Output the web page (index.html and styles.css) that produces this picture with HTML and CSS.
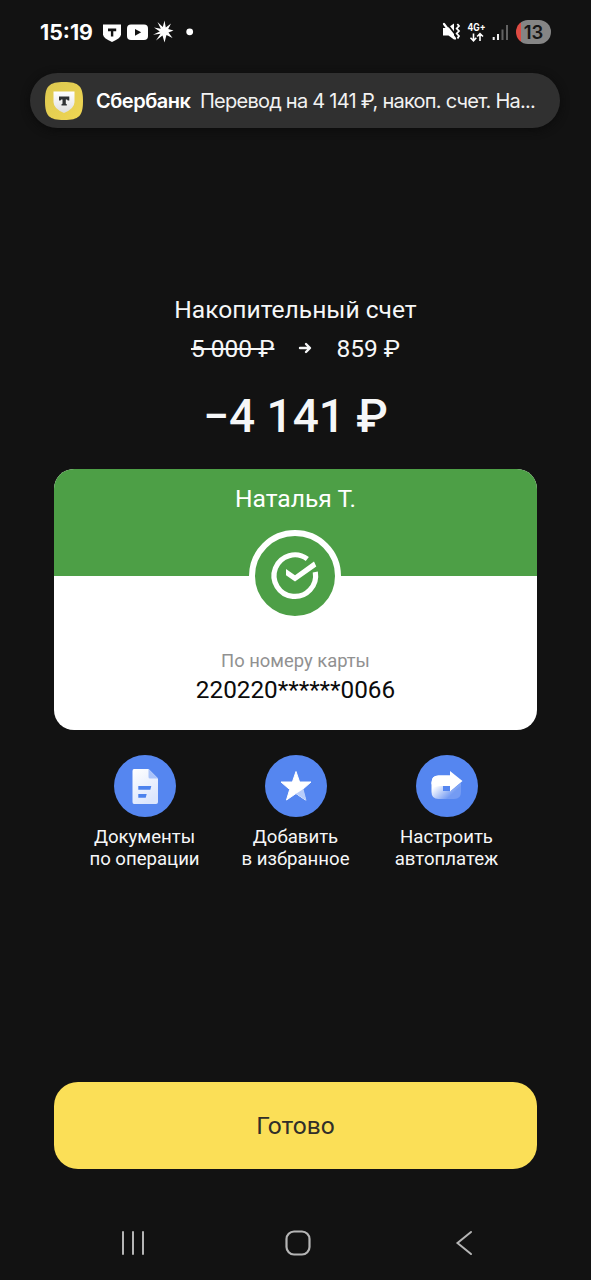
FILE: index.html
```html
<!DOCTYPE html>
<html lang="ru">
<head>
<meta charset="utf-8">
<title>Перевод</title>
<link rel="stylesheet" href="styles.css">
</head>
<body>
<div class="screen">
  <header class="status">
    <div class="status-left">
      <span class="clock">15:19</span>
      <svg class="status-icons" width="100" height="30" viewBox="0 0 100 30">
        <path d="M3 7.500H21V17.500Q21 21 12 25Q3 21 3 17.500Z" fill="#fff"/>
        <path d="M8 11.500H16.200V14.300H13.300V19.500H10.900V14.300H8Z" fill="#121212"/>
        <rect x="27" y="7.500" width="21" height="15.500" rx="4" fill="#fff"/>
        <path d="M35 12L41.200 15.300L35 18.800Z" fill="#121212"/>
        <path d="M64.500 3.500L65.800 10.500L71 6.500L68.200 12L73.500 13.500L68.500 15.500L72.500 21L66.500 18L64.500 25.500L62.500 18.500L56 23.500L60.500 16.800L53 17.800L59.800 14.500L54 10.500L60.800 11.800L57.500 5L62.800 10Z" fill="#fff"/>
        <circle cx="89.700" cy="14.800" r="3.400" fill="#fff"/>
      </svg>
    </div>
    <div class="status-right">
      <svg width="68" height="30" viewBox="0 0 68 30">
        <path d="M1 11H5.500L12 6.500V22.500L6.500 18.500H1Z" fill="#fff"/>
        <path d="M4 5.500L13.500 17.500" stroke="#121212" stroke-width="1.800"/>
        <path d="M2 7L13 21.500" stroke="#fff" stroke-width="2.200" stroke-linecap="round"/>
        <path d="M15.300 7L17 9L14.700 11.500L17 14L14.700 16.500L17 19L15.500 21.500" fill="none" stroke="#fff" stroke-width="1.800"/>
        <text class="network" x="25.500" y="13.500" textLength="18" lengthAdjust="spacingAndGlyphs">4G+</text>
        <path d="M31.500 16.500V23.500M28.500 20.800L31.500 23.800L34.300 20.800M38 24V17M35.200 19.500L38 16.700L41 19.500" fill="none" stroke="#fff" stroke-width="1.600"/>
        <path d="M51.700 20V23M56 17V23" stroke="#f2f2f2" stroke-width="2"/>
        <path d="M60.500 12.500V23M65 8V23" stroke="#626262" stroke-width="2"/>
      </svg>
      <span class="battery">13</span>
    </div>
  </header>

  <section class="notice">
    <svg width="38" height="38" viewBox="0 0 38 38">
      <defs>
        <linearGradient id="shield" x2="0" y2="1"><stop stop-color="#fff"/><stop offset="1" stop-color="#dedede"/></linearGradient>
        <linearGradient id="gold" x2="1" y2="1"><stop stop-color="#dcc850"/><stop offset="1" stop-color="#f0d653"/></linearGradient>
      </defs>
      <path d="M19 0C34 0 38 4 38 19S34 38 19 38S0 34 0 19S4 0 19 0Z" fill="url(#gold)"/>
      <path d="M8.500 9.500H29.500V20Q29.500 26.500 19 31Q8.500 26.500 8.500 20Z" fill="url(#shield)"/>
      <path d="M14 14.500H24.300V18.500H22.800L22 17.500H20.800V21.800L21.800 22.300V23.500H16.500V22.300L17.500 21.800V17.500H16.200L15.500 18.500H14Z" fill="#303234"/>
    </svg>
    <b class="notice-title">Сбербанк</b>
    <span class="notice-text">Перевод на 4 141 ₽, накоп. счет. На...</span>
  </section>

  <main class="transfer">
    <h1 class="account">Накопительный счет</h1>
    <div class="balance">
      <s class="before">5 000 ₽</s>
      <svg width="14" height="14" viewBox="0 0 14 14"><path d="M2 7H11.500M8 3L12 7L8 11" fill="none" stroke="#f6f7f8" stroke-width="2.400" stroke-linecap="round" stroke-linejoin="round"/></svg>
      <span class="after">859 ₽</span>
    </div>
    <div class="amount">−4 141 ₽</div>

    <article class="card">
      <div class="card-head"><span class="recipient">Наталья Т.</span></div>
      <svg class="avatar" width="92" height="92" viewBox="0 0 92 92">
        <circle cx="46" cy="46" r="43" fill="#4d9f46" stroke="#fff" stroke-width="6"/>
        <path d="M58.300 29A20.800 20.800 0 1 0 66.300 42" fill="none" stroke="#fff" stroke-width="5.200"/>
        <path d="M37 39L46 45.300L65 31.500L67.300 36.500L46 51.500L37 45.300Z" fill="#fff"/>
      </svg>
      <div class="card-body">
        <span class="method">По номеру карты</span>
        <span class="number">220220******0066</span>
      </div>
    </article>

    <nav class="actions">
      <a class="action">
        <svg width="62" height="62" viewBox="0 0 62 62">
          <defs><linearGradient id="sheet" x2="0.500" y2="1"><stop stop-color="#fff"/><stop offset="1" stop-color="#dce6fd"/></linearGradient></defs>
          <circle cx="31" cy="31" r="31" fill="#5586f0"/>
          <path d="M20 14H34.500L44 23.500V47Q44 49 42 49H20Q18.500 49 18.500 47V16Q18.500 14 20 14Z" fill="url(#sheet)"/>
          <path d="M34.500 14L44 23.500H36Q34.500 23.500 34.500 22Z" fill="#a9c3fa"/>
          <path d="M24.300 31H37.300L36.300 34.700H24.300ZM24.300 39H32.700L31.700 42.700H24.300Z" fill="#4c82ee"/>
        </svg>
        <span class="label">Документы</span><span class="label">по операции</span>
      </a>
      <a class="action">
        <svg width="62" height="62" viewBox="0 0 62 62">
          <circle cx="31" cy="31" r="31" fill="#5586f0"/>
          <path d="M31 16.500L34.600 27H46L37.500 34.500L40.500 45L31 38.500L21.500 45L24.700 34.500L16 27H27.400Z" fill="#fff" stroke="#fff" stroke-linejoin="round"/>
          <path d="M38.500 34L41.500 45.800L31 38.800Z" fill="#b8cdfa"/>
        </svg>
        <span class="label">Добавить</span><span class="label">в избранное</span>
      </a>
      <a class="action">
        <svg width="62" height="62" viewBox="0 0 62 62">
          <defs>
            <linearGradient id="fade" gradientUnits="userSpaceOnUse" x1="20" y1="30" x2="32" y2="43"><stop stop-color="#fff"/><stop offset="1" stop-color="#749bf3"/></linearGradient>
          </defs>
          <circle cx="31" cy="31" r="31" fill="#5586f0"/>
          <path d="M15.500 27.500Q15.500 20.500 22.500 20.500H38V31H27V36H35L45 28V37Q45 44 38 44H22.500Q15.500 44 15.500 37Z" fill="url(#fade)"/>
          <path d="M15.500 29V27.500Q15.500 20.500 22.500 20.500H34V16L46.500 26L34 36.500V31H27Q22 31 18 32Z" fill="#fff"/>
        </svg>
        <span class="label">Настроить</span><span class="label">автоплатеж</span>
      </a>
    </nav>
  </main>

  <button class="done">Готово</button>

  <footer class="navbar">
    <svg width="24" height="26" viewBox="0 0 24 26"><path d="M2 2V24M12 2V24M22 2V24" stroke="#b5b5b5" stroke-width="2" stroke-linecap="round"/></svg>
    <svg class="home" width="26" height="26" viewBox="0 0 26 26"><rect x="1.500" y="1.500" width="23" height="23" rx="7.500" fill="none" stroke="#b5b5b5" stroke-width="2.200"/></svg>
    <svg width="18" height="26" viewBox="0 0 18 26"><path d="M16 2L2.500 13L16 24" fill="none" stroke="#b5b5b5" stroke-width="2" stroke-linecap="round"/></svg>
  </footer>
</div>
</body>
</html>
```
FILE: styles.css
```css
* { box-sizing: border-box; }
body { margin: 0; background: #121212; }
svg { display: block; flex: none; }
.screen {
  width: 591px; height: 1280px;
  display: flex; flex-direction: column;
  background: #121212; color: #f6f7f8;
  font-family: Roboto, sans-serif;
  white-space: nowrap; overflow: hidden;
}
.status {
  height: 73px; padding: 15px 40px 0 40px;
  display: flex; justify-content: space-between; align-items: flex-start;
}
.status-left, .status-right { display: flex; align-items: center; height: 33px; }
.clock { width: 60px; font: 700 21.3px/30px Inter, sans-serif; letter-spacing: 0; color: #fff; }
.network { font: 700 10px Inter, sans-serif; fill: #fff; }
.status-right { gap: 6px; }
.battery {
  width: 35px; height: 24px; border-radius: 12px;
  background: linear-gradient(90deg, #df4b43 5px, #858585 5px);
  color: #161616; text-align: center; font: 600 18.5px/24px Inter, sans-serif;
}
.notice {
  height: 55px; margin: 0 31px 0 30px; padding-left: 15px;
  display: flex; align-items: center;
  border-radius: 28px; background: #303030;
  box-shadow: 0 2px 8px #0b0b0b;
  font-family: Inter, sans-serif; font-size: 20px;
}
.notice-title { width: 104px; margin-left: 13px; font-weight: 600; letter-spacing: -0.5px; color: #fff; }
.notice-text { letter-spacing: -0.76px; color: #f2f2f2; }
.transfer {
  height: 954px; padding: 165px 54px 0;
  display: flex; flex-direction: column; align-items: center;
}
.account { margin: 0; font-size: 24.6px; font-weight: 400; line-height: 34px; }
.balance { height: 38px; margin-top: 2px; display: flex; align-items: center; font-size: 24.5px; gap: 24px; }
.before { text-decoration-thickness: 1.5px; }
.amount { margin-top: 22px; height: 54px; font-size: 46px; font-weight: 500; line-height: 54px; }
.card {
  position: relative; width: 483px; height: 261px; margin-top: 26px;
  border-radius: 20px; overflow: hidden; background: #fff; text-align: center; flex: none;
}
.card-head { height: 107px; padding-top: 13px; background: #4d9f46; color: #fff; font-size: 24.6px; line-height: 34px; }
.avatar { position: absolute; left: 195px; top: 61px; }
.card-body { padding-top: 73px; display: flex; flex-direction: column; align-items: center; }
.method { font-size: 18.4px; line-height: 24px; color: #919191; }
.number { font-size: 24.3px; line-height: 34px; color: #0b0b0b; }
.actions { display: grid; grid-template-columns: repeat(3, 151px); margin-top: 25px; }
.action { display: flex; flex-direction: column; align-items: center; }
.label { font-size: 18.6px; line-height: 22px; }
.action svg { margin-bottom: 9px; }
.done {
  height: 87px; margin: 0 54px; padding: 0; border: 0; flex: none;
  border-radius: 24px; background: #fbdf57; color: #302e29;
  font: 400 24.5px Roboto, sans-serif;
}
.navbar { height: 111px; padding: 37px 118px 0 121px; display: flex; justify-content: space-between; align-items: center; }
.home { margin-right: 4px; }
```
